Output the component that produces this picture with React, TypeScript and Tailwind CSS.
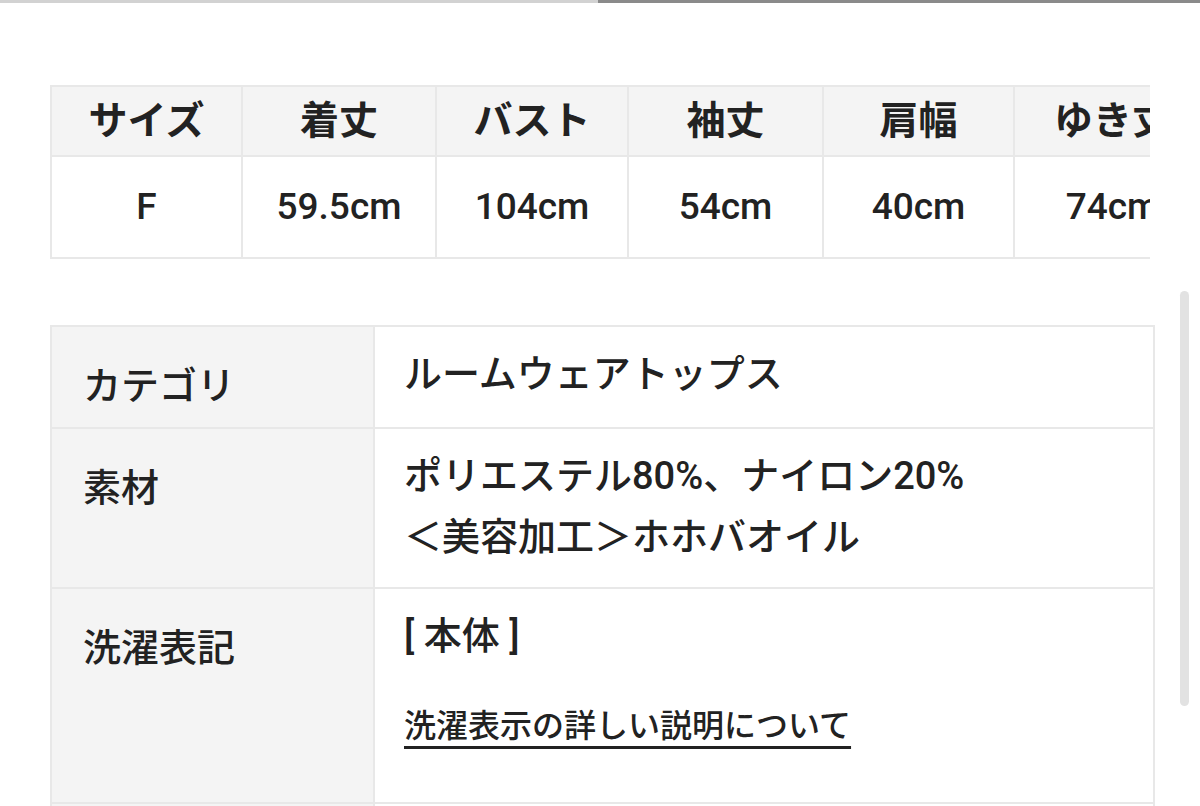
const sizeHead = ["サイズ", "着丈", "バスト", "袖丈", "肩幅", "ゆき丈"];
const sizeRow = ["F", "59.5cm", "104cm", "54cm", "40cm", "74cm"];

const font = { fontFamily: 'Roboto, "Noto Sans CJK JP", sans-serif' };

function SizeTable() {
  return (
    <div className="ml-[50px] w-[1100px] overflow-hidden">
      <div className="grid w-[1160px] grid-cols-[191px_194px_192px_195px_191px_197px] border-l-2 border-t-2 border-[#e8e8e8]">
        {sizeHead.map((h) => (
          <div
            key={h}
            className="flex h-[70px] items-center justify-center border-b-2 border-r-2 border-[#e8e8e8] bg-[#f4f4f4] text-[39px] font-semibold text-[#222]"
          >
            {h}
          </div>
        ))}
        {sizeRow.map((v) => (
          <div
            key={v}
            className="flex h-[102px] items-center justify-center border-b-2 border-r-2 border-[#e8e8e8] bg-white text-[37px] font-medium text-[#222]"
          >
            {v}
          </div>
        ))}
      </div>
    </div>
  );
}

function SpecRow({ label, children, h }: { label: string; children: React.ReactNode; h: string }) {
  return (
    <>
      <div className={`${h} border-b-2 border-r-2 border-[#e8e8e8] bg-[#f4f4f4] px-[31px] pt-[34px] text-[38px] font-medium leading-[50px] text-[#222]`}>
        {label}
      </div>
      <div className="border-b-2 border-r-2 border-[#e8e8e8] bg-white px-[29px] pt-[17px] text-[38px] font-medium leading-[61px] text-[#222]">
        {children}
      </div>
    </>
  );
}

export default function App() {
  return (
    <div className="relative h-[806px] w-[1200px] overflow-hidden bg-white" style={font}>
      <div className="flex h-[3px]">
        <div className="w-[598px] bg-[#d2d2d2]" />
        <div className="flex-1 bg-[#8a8a8a]" />
      </div>

      <div className="pt-[82px]">
        <SizeTable />

        <div className="ml-[50px] mt-[66px] grid w-[1105px] grid-cols-[323px_1fr] border-l-2 border-t-2 border-[#e8e8e8]">
          <SpecRow label="カテゴリ" h="h-[102px]">
            ルームウェアトップス
          </SpecRow>
          <SpecRow label="素材" h="h-[160px]">
            <p>ポリエステル80%、ナイロン20%</p>
            <p>＜美容加工＞ホホバオイル</p>
          </SpecRow>
          <SpecRow label="洗濯表記" h="h-[215px]">
            <p>[ 本体 ]</p>
            <a href="#" className="mt-[34px] block w-fit text-[32px] leading-[50px] underline decoration-[3px] underline-offset-[9px]">
              洗濯表示の詳しい説明について
            </a>
          </SpecRow>
          <SpecRow label="" h="h-[80px]">
            {""}
          </SpecRow>
        </div>
      </div>

      <div className="absolute right-[11px] top-[291px] h-[415px] w-[9px] rounded-full bg-[#e2e2e2]" />
    </div>
  );
}
